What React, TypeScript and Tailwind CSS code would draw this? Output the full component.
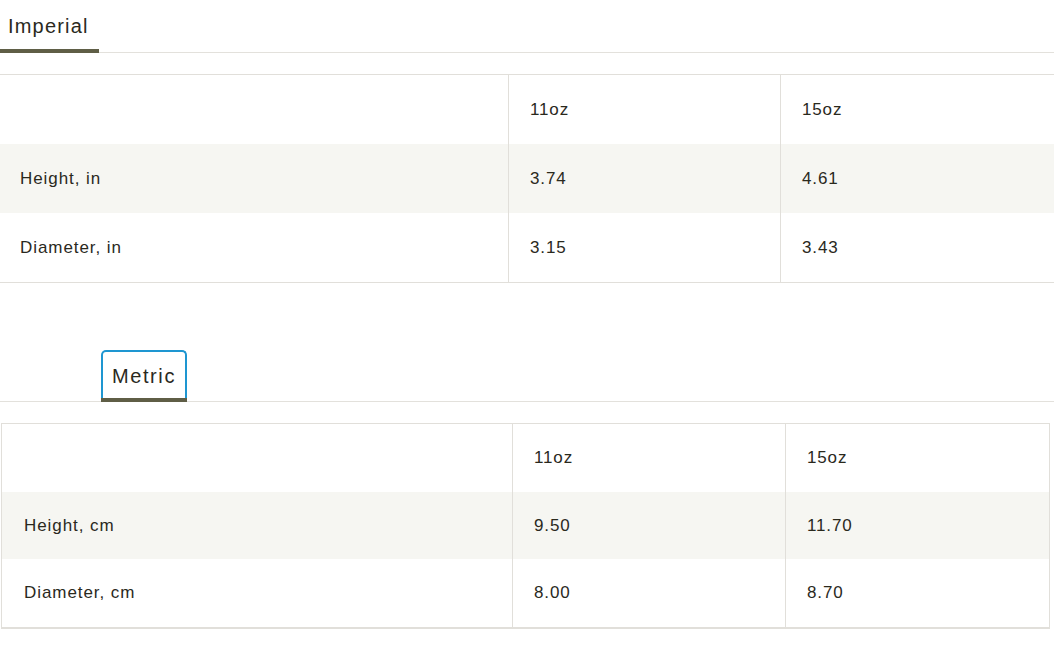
import React from 'react';

type Row = { label: string; values: string[]; striped?: boolean };

const font = { fontFamily: '"Liberation Sans", Arial, sans-serif' };

const imperialRows: Row[] = [
  { label: '', values: ['11oz', '15oz'] },
  { label: 'Height, in', values: ['3.74', '4.61'], striped: true },
  { label: 'Diameter, in', values: ['3.15', '3.43'] },
];

const metricRows: Row[] = [
  { label: '', values: ['11oz', '15oz'] },
  { label: 'Height, cm', values: ['9.50', '11.70'], striped: true },
  { label: 'Diameter, cm', values: ['8.00', '8.70'] },
];

const SizeTable: React.FC<{ rows: Row[]; cols: string; boxed?: boolean }> = ({ rows, cols, boxed }) => (
  <div
    className={
      boxed
        ? 'ml-[1px] w-[1049px] border border-b-2 border-[#e1dfda]'
        : 'w-full border-t border-b border-[#e1dfda]'
    }
  >
    {rows.map((row, i) => (
      <div
        key={i}
        className={`grid ${cols} ${boxed ? 'h-[67.7px]' : 'h-[69px]'} ${row.striped ? 'bg-[#f6f6f2]' : 'bg-white'}`}
      >
        <div
          className={`flex items-center ${boxed ? 'pl-[22px]' : 'pl-[20px]'} text-[17px] tracking-[0.055em] text-[#2a291d]`}
        >
          {row.label}
        </div>
        {row.values.map((v, j) => (
          <div
            key={j}
            className="flex items-center pl-[21px] border-l border-[#e1dfda] text-[17px] tracking-[0.05em] text-[#2a291d]"
          >
            {v}
          </div>
        ))}
      </div>
    ))}
  </div>
);

export default function App() {
  return (
    <div className="w-[1054px] h-[661px] bg-white overflow-hidden" style={font}>
      {/* imperial */}
      <div className="h-[53px] border-b border-[#e3e1dc] flex">
        <div className="w-[99px] h-[53px] flex flex-col">
          <div className="flex-1 flex items-center pt-[3px] pl-[8px] text-[20px] tracking-[0.06em] text-[#2a291d]">
            Imperial
          </div>
          <div className="h-[4px] bg-[#5f5e46]" />
        </div>
      </div>
      <div className="mt-[21px]">
        <SizeTable rows={imperialRows} cols="grid-cols-[508px_272px_1fr]" />
      </div>

      {/* metric */}
      <div className="mt-[67px] h-[52px] border-b border-[#e3e1dc] flex">
        <div className="ml-[101px] w-[86px] h-[52px] flex flex-col">
          <div className="flex-1 border-2 border-b-0 border-[#1e96d1] rounded-t-[5px] flex items-center justify-center pt-[2px] text-[20px] tracking-[0.08em] text-[#2a291d]">
            Metric
          </div>
          <div className="h-[4px] bg-[#5f5e46]" />
        </div>
      </div>
      <div className="mt-[21px]">
        <SizeTable rows={metricRows} cols="grid-cols-[510px_273px_1fr]" boxed />
      </div>
    </div>
  );
}
